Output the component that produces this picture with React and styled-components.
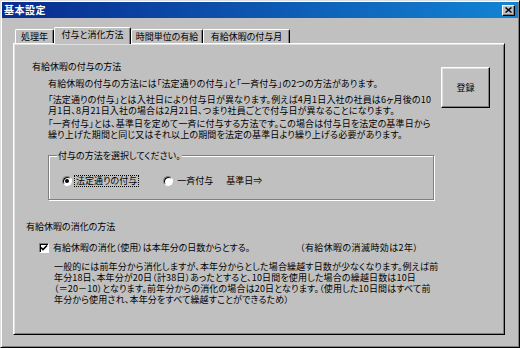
import React from 'react';
import styled, { createGlobalStyle, css } from 'styled-components';

const FONT = `"Noto Sans CJK JP", "Noto Sans", sans-serif`;

const Global = createGlobalStyle`
  html, body { margin: 0; padding: 0; background: #c0c0c0; }
  * { box-sizing: border-box; }
`;

const Window = styled.div`
  width: 520px;
  height: 348px;
  background: #c0c0c0;
  border: 1px solid;
  border-color: #dfdfdf #000 #000 #dfdfdf;
  box-shadow: inset 1px 1px #fff, inset -1px -1px #808080;
  padding: 1px;
  display: flex;
  flex-direction: column;
  font-family: ${FONT};
  font-size: 9px;
  color: #000;
  font-feature-settings: "palt";
`;

const TitleBar = styled.div`
  height: 16px;
  display: flex;
  align-items: center;
  justify-content: space-between;
  background: linear-gradient(to right, #082a8e 0%, #1284d4 100%);
  padding: 0 2px;
`;

const TitleText = styled.span`
  color: #fff;
  font-weight: bold;
  font-size: 10px;
  line-height: 16px;
  letter-spacing: 0.5px;
`;

const CloseButton = styled.div`
  width: 13px;
  height: 11px;
  background: #c0c0c0;
  border: 1px solid;
  border-color: #fff #000 #000 #fff;
  box-shadow: inset -1px -1px #808080;
  display: flex;
  align-items: center;
  justify-content: center;
  margin-right: 1px;
`;

const Body = styled.div`
  flex: 1;
  padding: 9px 0 0 11px;
  display: flex;
  flex-direction: column;
`;

const TabStrip = styled.div`
  display: flex;
  align-items: flex-end;
  height: 16px;
  margin-left: 2px;
  position: relative;
  z-index: 1;
`;

const Tab = styled.div`
  width: ${p => p.w}px;
  height: ${p => (p.active ? 17 : 14)}px;
  margin-bottom: ${p => (p.active ? -1 : 0)}px;
  background: #c0c0c0;
  border-top: 1px solid #fff;
  border-left: 1px solid #fff;
  border-right: 1px solid #000;
  border-radius: 2px 2px 0 0;
  box-shadow: inset -1px 0 #808080;
  display: flex;
  justify-content: center;
  align-items: ${p => (p.active ? 'flex-start' : 'center')};
  padding-top: ${p => (p.active ? 1 : 0)}px;
  line-height: 12px;
  white-space: nowrap;
`;

const Panel = styled.div`
  width: 492px;
  height: 292px;
  border: 1px solid;
  border-color: #fff #000 #000 #fff;
  box-shadow: inset 1px 1px #dfdfdf, inset -1px -1px #808080;
  padding-top: 17px;
  display: flex;
  flex-direction: column;
`;

const TopRow = styled.div`
  display: flex;
  justify-content: space-between;
  align-items: flex-start;
`;

const LeftCol = styled.div`
  margin-left: 18px;
`;

const Heading = styled.div`
  line-height: 11px;
  margin-left: ${p => p.indent || 0}px;
  margin-top: ${p => p.top || 0}px;
  white-space: nowrap;
`;

const Para = styled.div`
  margin-left: ${p => p.indent}px;
  margin-top: ${p => p.top}px;
  line-height: 11px;
  letter-spacing: 0.15px;
`;

const Line = styled.div`
  white-space: nowrap;
`;

const RegisterButton = styled.div`
  width: 49px;
  height: 41px;
  flex: none;
  margin-top: 6px;
  margin-right: 14px;
  background: #c0c0c0;
  border: 1px solid;
  border-color: #fff #000 #000 #fff;
  box-shadow: inset -1px -1px #808080, inset 1px 1px #dfdfdf;
  display: flex;
  align-items: center;
  justify-content: center;
`;

const Group = styled.div`
  position: relative;
  margin-left: 34px;
  margin-top: 15px;
  width: 386px;
  height: 45px;
  border: 1px solid #808080;
  box-shadow: 1px 1px 0 #fff, inset 1px 1px 0 #fff;
  display: flex;
  align-items: center;
  padding-top: 7px;
`;

const Legend = styled.span`
  position: absolute;
  top: -6px;
  left: 8px;
  padding: 0 1px;
  line-height: 11px;
  background: #c0c0c0;
  white-space: nowrap;
`;

const Radio = styled.span`
  width: 10px;
  height: 10px;
  flex: none;
  border-radius: 50%;
  background: #fff;
  border: 1px solid;
  border-color: #808080 #fff #fff #808080;
  box-shadow: inset 1px 1px #000;
  position: relative;
  margin-left: ${p => p.gap}px;
  ${p =>
    p.checked &&
    css`
      &::after {
        content: "";
        position: absolute;
        left: 2px;
        top: 2px;
        width: 4px;
        height: 4px;
        border-radius: 50%;
        background: #000;
      }
    `}
`;

const RadioLabel = styled.span`
  margin-left: 2px;
  padding: 0 1px;
  line-height: 10px;
  border: 1px ${p => (p.focused ? 'dotted #000' : 'solid transparent')};
  white-space: pre;
`;

const CheckRow = styled.div`
  display: flex;
  align-items: center;
  margin-top: 10px;
  line-height: 11px;
`;

const CheckItem = styled.div`
  display: flex;
  align-items: center;
  width: 261px;
  margin-left: 25px;
`;

const CheckBox = styled.span`
  width: 10px;
  height: 10px;
  flex: none;
  background: #fff;
  border: 1px solid;
  border-color: #808080 #fff #fff #808080;
  box-shadow: inset 1px 1px #000;
  display: flex;
  align-items: center;
  justify-content: center;
`;

const CheckText = styled.span`
  margin-left: 4px;
  white-space: nowrap;
`;

const Note = styled.span`
  white-space: nowrap;
  letter-spacing: 0.4px;
`;

const Lines = ({ items }) => items.map((t, i) => <Line key={i}>{t}</Line>);

const tabs = [
  { label: '処理年', w: 39 },
  { label: '付与と消化方法', w: 77, active: true },
  { label: '時間単位の有給', w: 72 },
  { label: '有給休暇の付与月', w: 87 },
];

export default function App() {
  return (
    <>
      <Global />
      <Window>
        <TitleBar>
          <TitleText>基本設定</TitleText>
          <CloseButton>
            <svg width="7" height="6" viewBox="0 0 7 6">
              <path d="M0.5 0.5 L6.5 5.5 M6.5 0.5 L0.5 5.5" stroke="#000" strokeWidth="1.4" />
            </svg>
          </CloseButton>
        </TitleBar>
        <Body>
          <TabStrip>
            {tabs.map(t => (
              <Tab key={t.label} w={t.w} active={t.active}>
                {t.label}
              </Tab>
            ))}
          </TabStrip>
          <Panel>
            <TopRow>
              <LeftCol>
                <Heading>有給休暇の付与の方法</Heading>
                <Para indent={16} top={6}>
                  <Lines items={['有給休暇の付与の方法には「法定通りの付与」と「一斉付与」の2つの方法があります。']} />
                </Para>
                <Para indent={16} top={5}>
                  <Lines
                    items={[
                      '「法定通りの付与」とは入社日により付与日が異なります。例えば4月1日入社の社員は6ヶ月後の10',
                      '月1日、8月21日入社の場合は2月21日、つまり社員ごとで付与日が異なることになります。',
                    ]}
                  />
                </Para>
                <Para indent={16} top={2}>
                  <Lines
                    items={[
                      '「一斉付与」とは、基準日を定めて一斉に付与する方法です。この場合は付与日を法定の基準日から',
                      '繰り上げた期間と同じ又はそれ以上の期間を法定の基準日より繰り上げる必要があります。',
                    ]}
                  />
                </Para>
              </LeftCol>
              <RegisterButton>登録</RegisterButton>
            </TopRow>

            <Group>
              <Legend>付与の方法を選択してください。</Legend>
              <Radio checked gap={13} />
              <RadioLabel focused>法定通りの付与</RadioLabel>
              <Radio gap={24} />
              <RadioLabel>{'一斉付与　  基準日⇒'}</RadioLabel>
            </Group>

            <Heading indent={12} top={21}>有給休暇の消化の方法</Heading>
            <CheckRow>
              <CheckItem>
                <CheckBox>
                  <svg width="8" height="8" viewBox="0 0 8 8">
                    <polyline points="1,3.5 3,5.6 7,1.5" fill="none" stroke="#000" strokeWidth="1.6" />
                  </svg>
                </CheckBox>
                <CheckText>有給休暇の消化（使用）は本年分の日数からとする。</CheckText>
              </CheckItem>
              <Note>（有給休暇の消滅時効は2年）</Note>
            </CheckRow>
            <Para indent={40} top={8}>
              <Lines
                items={[
                  '一般的には前年分から消化しますが、本年分からとした場合繰越す日数が少なくなります。例えば前',
                  '年分18日、本年分が20日（計38日）あったとすると、10日間を使用した場合の繰越日数は10日',
                  '（＝20－10）となります。前年分からの消化の場合は20日となります。（使用した10日間はすべて前',
                  '年分から使用され、本年分をすべて繰越すことができるため）',
                ]}
              />
            </Para>
          </Panel>
        </Body>
      </Window>
    </>
  );
}
